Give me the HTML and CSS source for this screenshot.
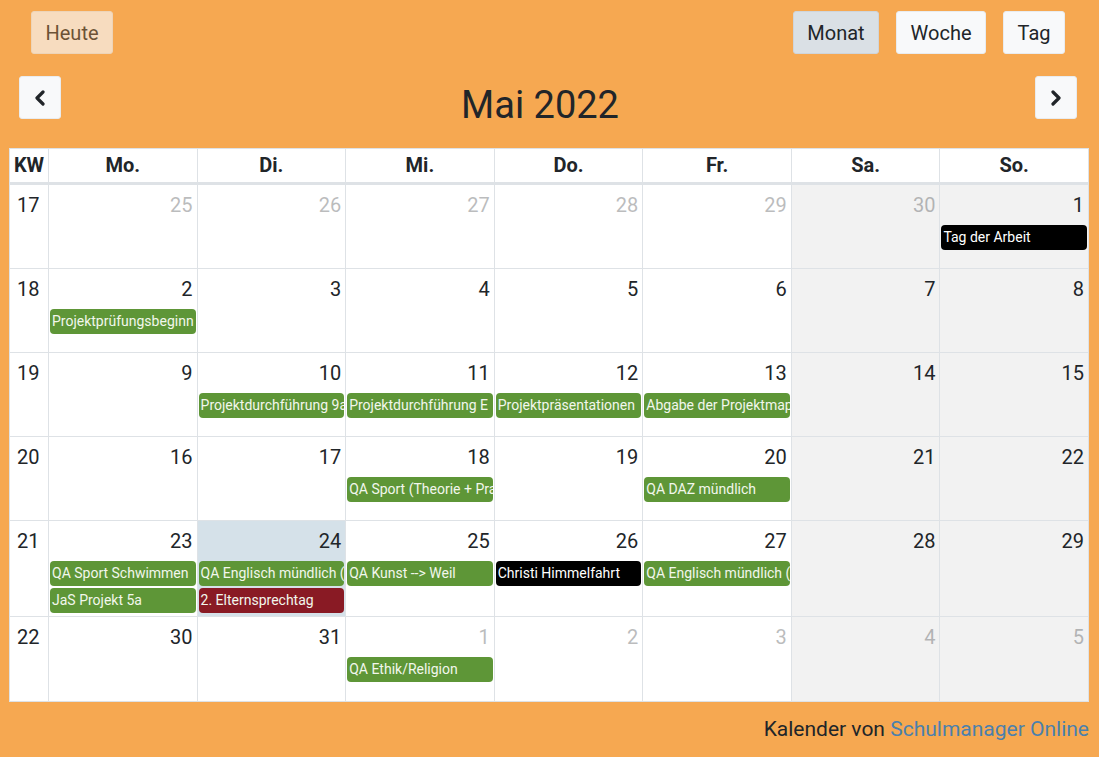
FILE: index.html
```html
<!DOCTYPE html>
<html lang="de">
<head>
    <meta charset="UTF-8">
    <meta name="viewport" content="width=device-width, initial-scale=1.0">
    <title>Kalender - Mai 2022</title>
    <link rel="stylesheet" href="styles.css">
</head>
<body>
    <div class="calendar">
        <div class="toolbar toolbar-top">
            <button class="btn btn-today" disabled>Heute</button>
            <div class="btn-group">
                <button class="btn active">Monat</button>
                <button class="btn">Woche</button>
                <button class="btn">Tag</button>
            </div>
        </div>

        <div class="toolbar toolbar-nav">
            <button class="btn btn-icon" aria-label="zurück">
                <svg width="14" height="16" viewBox="0 0 14 16"><polyline points="10,2 4,8 10,14" fill="none" stroke="#212529" stroke-width="3.2" stroke-linecap="round" stroke-linejoin="round"/></svg>
            </button>
            <h2 class="title">Mai 2022</h2>
            <button class="btn btn-icon" aria-label="weiter">
                <svg width="14" height="16" viewBox="0 0 14 16"><polyline points="4,2 10,8 4,14" fill="none" stroke="#212529" stroke-width="3.2" stroke-linecap="round" stroke-linejoin="round"/></svg>
            </button>
        </div>

        <div class="month">
            <div class="head-row">
                <div class="head-cell">KW</div>
                <div class="head-cell">Mo.</div>
                <div class="head-cell">Di.</div>
                <div class="head-cell">Mi.</div>
                <div class="head-cell">Do.</div>
                <div class="head-cell">Fr.</div>
                <div class="head-cell">Sa.</div>
                <div class="head-cell">So.</div>
            </div>

            <!-- KW 17 -->
            <div class="week">
                <div class="kw">17</div>
                <div class="day other"><div class="day-num">25</div></div>
                <div class="day other"><div class="day-num">26</div></div>
                <div class="day other"><div class="day-num">27</div></div>
                <div class="day other"><div class="day-num">28</div></div>
                <div class="day other"><div class="day-num">29</div></div>
                <div class="day weekend other"><div class="day-num">30</div></div>
                <div class="day weekend">
                    <div class="day-num">1</div>
                    <div class="event black">Tag der Arbeit</div>
                </div>
            </div>

            <!-- KW 18 -->
            <div class="week">
                <div class="kw">18</div>
                <div class="day">
                    <div class="day-num">2</div>
                    <div class="event">Projektprüfungsbeginn</div>
                </div>
                <div class="day"><div class="day-num">3</div></div>
                <div class="day"><div class="day-num">4</div></div>
                <div class="day"><div class="day-num">5</div></div>
                <div class="day"><div class="day-num">6</div></div>
                <div class="day weekend"><div class="day-num">7</div></div>
                <div class="day weekend"><div class="day-num">8</div></div>
            </div>

            <!-- KW 19 -->
            <div class="week">
                <div class="kw">19</div>
                <div class="day"><div class="day-num">9</div></div>
                <div class="day">
                    <div class="day-num">10</div>
                    <div class="event">Projektdurchführung 9a</div>
                </div>
                <div class="day">
                    <div class="day-num">11</div>
                    <div class="event">Projektdurchführung E</div>
                </div>
                <div class="day">
                    <div class="day-num">12</div>
                    <div class="event">Projektpräsentationen</div>
                </div>
                <div class="day">
                    <div class="day-num">13</div>
                    <div class="event">Abgabe der Projektmappe</div>
                </div>
                <div class="day weekend"><div class="day-num">14</div></div>
                <div class="day weekend"><div class="day-num">15</div></div>
            </div>

            <!-- KW 20 -->
            <div class="week">
                <div class="kw">20</div>
                <div class="day"><div class="day-num">16</div></div>
                <div class="day"><div class="day-num">17</div></div>
                <div class="day">
                    <div class="day-num">18</div>
                    <div class="event">QA Sport (Theorie + Praxis)</div>
                </div>
                <div class="day"><div class="day-num">19</div></div>
                <div class="day">
                    <div class="day-num">20</div>
                    <div class="event">QA DAZ mündlich</div>
                </div>
                <div class="day weekend"><div class="day-num">21</div></div>
                <div class="day weekend"><div class="day-num">22</div></div>
            </div>

            <!-- KW 21 -->
            <div class="week">
                <div class="kw">21</div>
                <div class="day">
                    <div class="day-num">23</div>
                    <div class="event">QA Sport Schwimmen</div>
                    <div class="event">JaS Projekt 5a</div>
                </div>
                <div class="day today">
                    <div class="day-num">24</div>
                    <div class="event">QA Englisch mündlich (Gruppe)</div>
                    <div class="event red">2. Elternsprechtag</div>
                </div>
                <div class="day">
                    <div class="day-num">25</div>
                    <div class="event">QA Kunst --&gt; Weil</div>
                </div>
                <div class="day">
                    <div class="day-num">26</div>
                    <div class="event black">Christi Himmelfahrt</div>
                </div>
                <div class="day">
                    <div class="day-num">27</div>
                    <div class="event">QA Englisch mündlich (Gruppe)</div>
                </div>
                <div class="day weekend"><div class="day-num">28</div></div>
                <div class="day weekend"><div class="day-num">29</div></div>
            </div>

            <!-- KW 22 -->
            <div class="week last">
                <div class="kw">22</div>
                <div class="day"><div class="day-num">30</div></div>
                <div class="day"><div class="day-num">31</div></div>
                <div class="day other">
                    <div class="day-num">1</div>
                    <div class="event">QA Ethik/Religion</div>
                </div>
                <div class="day other"><div class="day-num">2</div></div>
                <div class="day other"><div class="day-num">3</div></div>
                <div class="day weekend other"><div class="day-num">4</div></div>
                <div class="day weekend other"><div class="day-num">5</div></div>
            </div>
        </div>

        <div class="credit">Kalender von <a href="#">Schulmanager Online</a></div>
    </div>
</body>
</html>
```

FILE: styles.css
```css
body{
    margin: 0;
    background-color: #f6a851;
    font-family: Roboto, "Liberation Sans", Arial, sans-serif;
    color: #212529;
}
.calendar{
    padding: 11px 10px 0 9px;
}
.toolbar{
    display: flex;
    justify-content: space-between;
}
.toolbar-top{
    padding: 0 24px 0 22px;
    align-items: center;
}
.toolbar-nav{
    margin-top: 22px;
    padding: 0 12px 0 10px;
    align-items: flex-start;
}
.btn-group{
    display: flex;
    gap: 17px;
}
.btn{
    font-family: inherit;
    font-size: 20px;
    line-height: 30px;
    padding: 5.5px 13.5px;
    color: #212529;
    background-color: #f8f9fa;
    border: 1px solid #e9ecef;
    border-radius: 3px;
}
.btn.active{
    background-color: #dae0e5;
    border-color: #cfd5db;
}
.btn-today{
    opacity: .65;
}
.btn-icon{
    width: 42px;
    height: 43px;
    padding: 0;
    display: flex;
    align-items: center;
    justify-content: center;
}
.title{
    margin: 7px 16px 0 0;
    font-size: 38px;
    font-weight: 400;
    line-height: 1.2;
}
.month{
    margin-top: 19px;
    background-color: #fff;
    border-left: 1px solid #dee2e6;
    border-top: 1px solid #dee2e6;
}
.head-row,
.week{
    display: grid;
    grid-template-columns: 39px repeat(7, 1fr);
}
.head-row{
    border-bottom: 3px solid #dee2e6;
}
.head-cell{
    text-align: center;
    font-size: 20px;
    font-weight: 700;
    line-height: 33px;
    border-right: 1px solid #dee2e6;
}
.week{
    min-height: 83px;
    border-bottom: 1px solid #dee2e6;
}
.week.last{
    min-height: 84px;
}
.kw{
    padding: 5px 0 0 7px;
    font-size: 20px;
    line-height: 30px;
    border-right: 1px solid #dee2e6;
}
.day{
    display: flex;
    flex-direction: column;
    gap: 2px;
    min-width: 0;
    padding-bottom: 3px;
    border-right: 1px solid #dee2e6;
}
.day.weekend{
    background-color: #f2f2f2;
}
.day.today{
    background-color: #d5e1e9;
}
.day-num{
    padding: 5px 4px 0 0;
    margin-bottom: 3px;
    text-align: right;
    font-size: 20px;
    line-height: 30px;
}
.day.other .day-num{
    opacity: .3;
}
.event{
    margin: 0 1px;
    padding: 2px 2px;
    font-size: 14px;
    line-height: 21px;
    color: #f2f7ec;
    background-color: #5e9637;
    border-radius: 4px;
    white-space: nowrap;
    overflow: hidden;
}
.event.black{
    background-color: #000;
    color: #fff;
}
.event.red{
    background-color: #891a24;
}
.credit{
    margin-top: 12px;
    text-align: right;
    font-size: 21px;
    line-height: 30px;
}
.credit a{
    color: #4a80ad;
    text-decoration: none;
}
```
